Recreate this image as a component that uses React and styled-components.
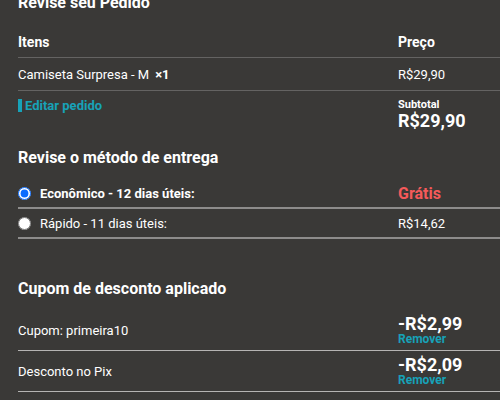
import React from "react";
import styled, { createGlobalStyle } from "styled-components";

const Global = createGlobalStyle`
  html, body { margin: 0; padding: 0; background: #3a3937; overflow: hidden; }
  body { font-family: Roboto, "Liberation Sans", sans-serif; color: #fff; }
`;

const Page = styled.main`
  padding-left: 18px;
  width: 482px;
`;

const Heading = styled.h2`
  margin: ${(p) => p.$mt}px 0 0;
  font-size: 16px;
  line-height: 20px;
  font-weight: 700;
  color: #fff;
`;

const Row = styled.div`
  display: grid;
  grid-template-columns: 380px 1fr;
  align-items: ${(p) => p.$align || "center"};
  height: ${(p) => p.$h}px;
  border-bottom: ${(p) => p.$line || "none"};
  box-sizing: content-box;
  margin-top: ${(p) => p.$mt || 0}px;
  padding-top: ${(p) => p.$pt || 0}px;
  font-size: 13px;
`;

const HeadCell = styled.span`
  font-size: 14px;
  font-weight: 700;
`;

const Cell = styled.span`
  font-size: 13px;
  font-weight: ${(p) => (p.$bold ? 700 : 400)};
  display: flex;
  align-items: center;
`;

const Qty = styled.b`
  margin-left: 6px;
  font-weight: 700;
`;

const EditLink = styled.a`
  display: inline-block;
  justify-self: start;
  margin-top: 1px;
  border-left: 4px solid #17a2b8;
  padding-left: 3px;
  line-height: 13px;
  font-size: 13px;
  font-weight: 700;
  color: #17a2b8;
  text-decoration: none;
`;

const Stack = styled.div`
  display: flex;
  flex-direction: column;
  align-items: flex-start;
`;

const Label = styled.span`
  font-size: 11px;
  line-height: 13px;
  font-weight: 700;
`;

const Amount = styled.span`
  font-size: 18px;
  line-height: ${(p) => p.$lh || 20}px;
  font-weight: 700;
`;

const Remove = styled.a`
  font-size: 12px;
  line-height: 13px;
  font-weight: 700;
  color: #17a2b8;
`;

const Radio = styled.input`
  width: 13px;
  height: 13px;
  margin: 0 9px 0 0;
  accent-color: #0a6cff;
`;

const Free = styled.span`
  font-size: 16px;
  font-weight: 700;
  color: #f55a5a;
`;

export default function App() {
  return (
    <>
      <Global />
      <Page>
        <Heading $mt={-7}>Revise seu Pedido</Heading>
        <Row $h={30} $mt={14} $line="1px solid #646362">
          <HeadCell>Itens</HeadCell>
          <HeadCell>Preço</HeadCell>
        </Row>
        <Row $h={32} $line="1px solid #646362">
          <Cell>
            Camiseta Surpresa - M <Qty>×1</Qty>
          </Cell>
          <Cell>R$29,90</Cell>
        </Row>
        <Row $h={33} $pt={7} $align="start">
          <EditLink href="#">Editar pedido</EditLink>
          <Stack>
            <Label>Subtotal</Label>
            <Amount>R$29,90</Amount>
          </Stack>
        </Row>

        <Heading $mt={17}>Revise o método de entrega</Heading>
        <Row $h={28} $mt={11} $line="2px solid #8d8c8b">
          <Cell $bold>
            <Radio type="radio" name="ship" defaultChecked />
            Econômico - 12 dias úteis:
          </Cell>
          <Free>Grátis</Free>
        </Row>
        <Row $h={28} $line="2px solid #8d8c8b">
          <Cell>
            <Radio type="radio" name="ship" />
            Rápido - 11 dias úteis:
          </Cell>
          <Cell>R$14,62</Cell>
        </Row>

        <Heading $mt={40}>Cupom de desconto aplicado</Heading>
        <Row $h={40} $mt={11} $line="1px solid #b5b4b3">
          <Cell>Cupom: primeira10</Cell>
          <Stack>
            <Amount $lh={18}>-R$2,99</Amount>
            <Remove>Remover</Remove>
          </Stack>
        </Row>
        <Row $h={40} $line="1px solid #b5b4b3">
          <Cell>Desconto no Pix</Cell>
          <Stack>
            <Amount $lh={18}>-R$2,09</Amount>
            <Remove>Remover</Remove>
          </Stack>
        </Row>
      </Page>
    </>
  );
}
